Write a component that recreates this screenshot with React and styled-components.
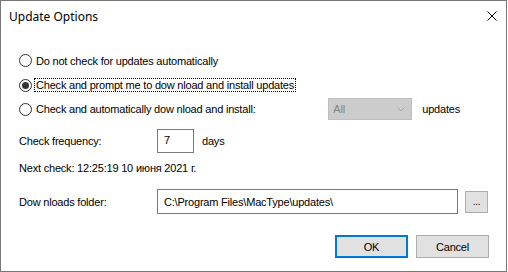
import React from "react";
import styled, { createGlobalStyle } from "styled-components";

const Global = createGlobalStyle`
  html, body { margin: 0; padding: 0; background: #ffffff; }
  body { width: 508px; height: 272px; overflow: hidden; }
`;

const Window = styled.div`
  box-sizing: border-box;
  width: 507px;
  height: 272px;
  border: 1px solid #777777;
  background: #ffffff;
  display: flex;
  flex-direction: column;
  font-family: "Liberation Sans", Arial, sans-serif;
  font-size: 11px;
  letter-spacing: -0.2px;
  color: #000;
`;

const TitleBar = styled.div`
  height: 30px;
  display: flex;
  align-items: center;
  justify-content: space-between;
  padding: 0 9px 0 8px;
`;

const Title = styled.div`
  font-family: "Noto Sans", "Open Sans", sans-serif;
  font-size: 12px;
  letter-spacing: 0;
  color: #000;
  margin-top: 1px;
`;

const CloseIcon = styled.svg`
  width: 10px;
  height: 10px;
`;

const Content = styled.div`
  display: flex;
  flex-direction: column;
  padding: 17px 17px 0 18px;
`;

const Row = styled.div`
  display: flex;
  align-items: center;
  height: ${(p) => p.h || 24}px;
  margin-top: ${(p) => p.mt || 0}px;
  justify-content: ${(p) => p.justify || "flex-start"};
`;

const Radio = styled.span`
  box-sizing: border-box;
  width: 13px;
  height: 13px;
  border-radius: 50%;
  border: 1px solid #333333;
  background: #fff;
  display: inline-flex;
  align-items: center;
  justify-content: center;
  flex: none;
  &::after {
    content: "";
    display: ${(p) => (p.checked ? "block" : "none")};
    width: 7px;
    height: 7px;
    border-radius: 50%;
    background: #333333;
  }
`;

const RadioLabel = styled.span`
  margin-left: 3px;
  padding: 0 1px;
  line-height: 12px;
  outline: ${(p) => (p.focused ? "1px dotted #000" : "none")};
  white-space: nowrap;
`;

const Select = styled.div`
  box-sizing: border-box;
  width: 84px;
  height: 22px;
  margin-left: auto;
  background: #cccccc;
  border: 1px solid #bfbfbf;
  display: flex;
  align-items: center;
  justify-content: space-between;
  padding: 0 6px 0 4px;
  color: #838383;
`;

const Label = styled.span`
  width: ${(p) => (p.w ? `${p.w}px` : "auto")};
  flex: none;
  white-space: nowrap;
  margin-left: ${(p) => p.ml || 0}px;
  margin-right: ${(p) => p.mr || 0}px;
`;

const TextBox = styled.div`
  box-sizing: border-box;
  width: ${(p) => p.w}px;
  height: ${(p) => p.h}px;
  border: 1px solid #7a7a7a;
  background: #fff;
  display: flex;
  align-items: ${(p) => (p.top ? "flex-start" : "center")};
  padding: ${(p) => (p.top ? "4px 6px" : "0 6px")};
  white-space: nowrap;
`;

const Button = styled.div`
  box-sizing: border-box;
  width: ${(p) => p.w}px;
  height: ${(p) => p.h}px;
  background: #e1e1e1;
  border: ${(p) => (p.primary ? "2px solid #0078d7" : "1px solid #adadad")};
  display: flex;
  align-items: center;
  justify-content: center;
  margin-left: ${(p) => p.ml || 0}px;
  font-size: ${(p) => p.fs || 11}px;
`;

export default function App() {
  return (
    <>
      <Global />
      <Window>
        <TitleBar>
          <Title>Update Options</Title>
          <CloseIcon viewBox="0 0 10 10">
            <path d="M0.5 0.5 L9.5 9.5 M9.5 0.5 L0.5 9.5" stroke="#000" strokeWidth="1" fill="none" />
          </CloseIcon>
        </TitleBar>
        <Content>
          <Row h={25}>
            <Radio />
            <RadioLabel>Do not check for updates automatically</RadioLabel>
          </Row>
          <Row h={24}>
            <Radio checked />
            <RadioLabel focused>Check and prompt me to dow nload and install updates</RadioLabel>
          </Row>
          <Row h={24}>
            <Radio />
            <RadioLabel>Check and automatically dow nload and install:</RadioLabel>
            <Select>
              <span>All</span>
              <svg width="8" height="5" viewBox="0 0 8 5">
                <path d="M0.5 0.5 L4 4 L7.5 0.5" stroke="#a8a8a8" fill="none" />
              </svg>
            </Select>
            <Label ml={10} mr={29}>updates</Label>
          </Row>
          <Row h={24} mt={8}>
            <Label w={138}>Check frequency:</Label>
            <TextBox w={37} h={24} top>7</TextBox>
            <Label ml={8}>days</Label>
          </Row>
          <Row h={20} mt={5}>
            <Label>Next check: 12:25:19 10 июня 2021 г.</Label>
          </Row>
          <Row h={25} mt={11}>
            <Label w={138}>Dow nloads folder:</Label>
            <TextBox w={301} h={25}>C:\Program Files\MacType\updates\</TextBox>
            <Button w={23} h={22} ml={7} fs={10}>...</Button>
          </Row>
          <Row h={23} mt={21} justify="flex-end">
            <Button w={73} h={23} primary>OK</Button>
            <Button w={73} h={23} ml={8}>Cancel</Button>
          </Row>
        </Content>
      </Window>
    </>
  );
}
